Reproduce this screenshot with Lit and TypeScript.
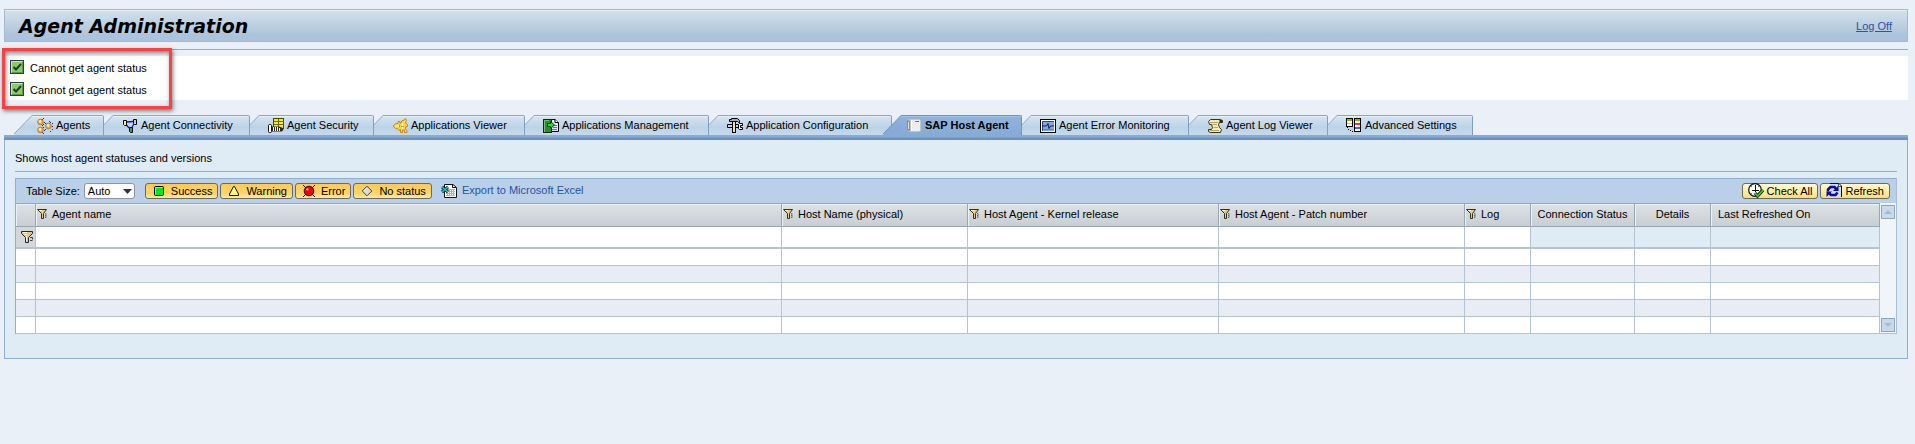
import { LitElement, html, css, svg, nothing } from "lit";
import { customElement, property, state } from "lit/decorators.js";
import { classMap } from "lit/directives/class-map.js";

const icons: Record<string, unknown> = {
  check: svg`<rect x="0.5" y="0.5" width="13" height="13" fill="#86cf5c" stroke="#2b3b4d"/><path d="M1.5 12.5V1.5H12.5" fill="none" stroke="#c4eea6"/><path d="M12.5 2V12.5H2" fill="none" stroke="#5a9a3c"/><path d="M3.5 7L6 9.5L11 4" fill="none" stroke="#24344a" stroke-width="2"/>`,
  agents: svg`<g fill="#1c2c9c"><path d="M6 0h1v1H6zM5 1h1v1H5zM7 4h1v1H7zM6 6h1v1H6zM5 7h1v1H5zM6 9h1v1H6zM7 12h1v1H7zM5 14h1v1H5zM6 15h1v1H6zM13 4h1v1h-1zM12 3h1v1h-1zM15 5h1v1h-1zM15 8h1v1h-1zM15 11h1v1h-1zM13 13h1v1h-1zM8 5h1v1H8zM8 11h1v1H8z"/></g><g stroke="#b06a18" stroke-width="0.8" fill="#f5a93c"><circle cx="3.5" cy="4" r="2.8"/><circle cx="3.5" cy="12" r="2.8"/><circle cx="11.5" cy="8" r="2.8"/></g><g fill="#fff0b8"><circle cx="3" cy="3.4" r="1.4"/><circle cx="3" cy="11.4" r="1.4"/><circle cx="11" cy="7.4" r="1.4"/></g>`,
  connectivity: svg`<path d="M5 4L11 3.5M4 6.5L7 10M12 6L9.5 10" fill="none" stroke="#1414e0" stroke-width="1.3"/><path d="M1.5 2.5H4.5V7.5H2.5L1.5 6.5Z" fill="#fff36a" stroke="#000"/><path d="M11.5 1.5H14.5V6.5H12.5L11.5 5.5Z" fill="#b8ccd8" stroke="#000"/><path d="M7.5 9.5H10.5V14.5H8.5L7.5 13.5Z" fill="#2ea836" stroke="#000"/>`,
  security: svg`<rect x="5.5" y="0.5" width="10" height="10" fill="#f5ea2a" stroke="#4a4604"/><path d="M6 3.5H15M6 6.5H15M10.5 1V10" stroke="#6e6806"/><path d="M4 8.5H11L14 9.5L15.5 11.5L14 13.5H4Z" fill="#2a2a2a"/><path d="M5.5 9V13M7.5 9V13M9.5 9V13M11.5 10V13" stroke="#f2f2f2"/><rect x="0.5" y="6.5" width="3" height="8" rx="1" fill="#fff" stroke="#111"/>`,
  viewer: svg`<path d="M1 8L4 5.5H6V3.5H8V5H9L10 2.5H12L12.5 1H14L14.5 2.5L13.5 5L15.5 6.5V8.5L13.5 9V11L15 12.5V14.5H12.5V12H10.5V14.5H8.5V11.5L7 12.5L5.5 10.5H3.5Z" fill="#fcd34c" stroke="#cf8a20"/><path d="M3.5 8H8M10.5 5V11M12.5 3V4" stroke="#fff6bc"/><path d="M7.5 6.5V9.5M9 8.5H12" stroke="#cf8a20" stroke-width="0.8"/>`,
  management: svg`<path d="M5.5 1.5H12L15.5 4.5V13.5H5.5Z" fill="#dfe8fa" stroke="#000"/><path d="M12 1.5V4.5H15.5" fill="#fff" stroke="#000"/><path d="M10 7.5H14M10 9.5H14M9 11.5H14" stroke="#5b74b8"/><rect x="0.5" y="1.5" width="8" height="13" fill="#2c8a34" stroke="#0a2a0c"/><path d="M1.5 14V2.5H6" fill="none" stroke="#7cc079"/><path d="M4.5 5.5H7.5V3.5L11.5 7L7.5 10.5V8.5H4.5Z" fill="#25e02b" stroke="#064a08"/>`,
  configuration: svg`<path d="M0.5 6.5H5M0.5 9.5H5M0.5 6.5V9.5M8.5 9.5H12M8.5 6.5H11" stroke="#000"/><path d="M1 8H12" stroke="#d0d4d8" stroke-width="2"/><path d="M15.5 5.5H12.5L11.5 6.5V10.5L12.5 11.5H15.5V9.5H13.5V7.5H15.5Z" fill="#f0f2f4" stroke="#000"/><path d="M2.5 1.5H4.5V0.5H10.5L12.5 2.5V4.5H11.5L10.5 3.5H2.5Z" fill="#a8aeb6" stroke="#000"/><rect x="5.5" y="3.5" width="3" height="11" fill="#f2dfa2" stroke="#000"/>`,
  host: svg`<path d="M1 2L4 1H14L15 3V13L12 14H3L1 12Z" fill="#c4c4c4"/><path d="M1 2L4 3V13L1 12Z" fill="#8f8f8f"/><rect x="5" y="2" width="9" height="11" fill="#ededed"/><path d="M5.5 13V2" stroke="#fff"/><path d="M2.5 4V11" stroke="#ddd"/><rect x="9" y="3" width="2" height="1" fill="#23b523"/><rect x="11" y="3" width="2" height="1" fill="#e03030"/>`,
  monitoring: svg`<rect x="0.5" y="1.5" width="15" height="13" fill="#fff" stroke="#000"/><rect x="2" y="3" width="12" height="10" fill="#82a8dc"/><path d="M2.5 13V3.5H14" fill="none" stroke="#2a4680"/><path d="M3 11.5H14" stroke="#5f86c0"/><path d="M2 8H6.5L8 5.5L9 10.5L10.5 8H14" fill="none" stroke="#0c1c54"/>`,
  log: svg`<path d="M3.5 1.5H13.5L15.5 2.5V4.5H12.5L11.5 6.5L12.5 9.5L14.5 11.5L13.5 14.5H3.5L1.5 13.5V11.5H4.5L5.5 9.5L4.5 6.5H2.5L1.5 3.5Z" fill="#f4ebb8" stroke="#3a3410"/><path d="M3 4.5H11.5M5.5 6.5H10M6.5 9.5H11M3 12.5H12" fill="none" stroke="#b0a766"/><path d="M12.5 2H15V4H12.5Z" fill="#222"/>`,
  settings: svg`<rect x="0.5" y="0.5" width="6" height="8" fill="#fff" stroke="#000"/><rect x="1" y="1" width="5" height="2" fill="#7ab81e"/><path d="M1 5.5H6" stroke="#c8c8c8"/><rect x="8.5" y="0.5" width="6" height="13" fill="#fff" stroke="#000"/><rect x="9" y="1" width="5" height="2" fill="#7ab81e"/><rect x="9" y="5" width="5" height="2" fill="#f03030"/><rect x="9" y="9" width="5" height="2" fill="#3a6cd8"/><path d="M1 9h1v1H1zM2 11h1v1H2zM4 12h1v1H4zM6 13h1v1H6z" fill="#000"/>`,
  success: svg`<rect x="3.5" y="3.5" width="9" height="9" rx="1" fill="#00e818" stroke="#000"/><path d="M4.5 11.5V4.5H11.5" fill="none" stroke="#7dfb88"/>`,
  warning: svg`<path d="M7.5 3.5H8.5L12.5 11V12.5H3.5V11Z" fill="#fff768" stroke="#111" stroke-linejoin="round"/>`,
  error: svg`<path d="M2 2L14 14M14 2L2 14" stroke="#111"/><circle cx="8" cy="8" r="4.8" fill="#f00000" stroke="#400"/><circle cx="6.4" cy="6.4" r="1.2" fill="#ffb0a0"/>`,
  none: svg`<path d="M8 3.2L12.8 8L8 12.8L3.2 8Z" fill="#dcdcdc" stroke="#444"/><path d="M5 8L8 5" stroke="#fff"/>`,
  excel: svg`<path d="M3.5 1.5H12L15.5 4.5V14.5H3.5Z" fill="#fff" stroke="#111"/><path d="M11.5 1.5V4.5H15" fill="none" stroke="#111"/><path d="M5 6.5H14M5 8.5H14M5 10.5H14M5 12.5H14M6.5 6V13M8.5 6V13M10.5 6V13M12.5 6V13" stroke="#aeb2b8"/><path d="M1 4L7 9M7 4L1 9" stroke="#0a3438" stroke-width="3"/><path d="M1 4L7 9M7 4L1 9" stroke="#27c4c8" stroke-width="1.3"/>`,
  checkAll: svg`<circle cx="7" cy="7" r="6.3" fill="#fff" stroke="#111" stroke-width="1.2"/><path d="M7.5 2V9M4 7.5H11" stroke="#111"/><path d="M3 3L4 4M11 3L10 4M3 11L4 10" stroke="#777"/><path d="M7 10L9.5 13L15 7" fill="none" stroke="#173c08" stroke-width="3.4"/><path d="M7 10L9.5 13L15 7" fill="none" stroke="#57c024" stroke-width="1.6"/>`,
  refresh: svg`<path d="M4.5 0.5H13L15.5 3V13.5H4.5Z" fill="#cfdcf4"/><path d="M4 0.5H13L15.5 3V14" fill="none" stroke="#111"/><path d="M12.5 1V3.5H15" fill="#fff" stroke="#555"/><path d="M2 8.5V6.5L4.5 4H8.5L10 6" fill="none" stroke="#0a0aa4" stroke-width="2.6"/><path d="M12.5 2.5V8H7Z" fill="#0a0aa4"/><path d="M11.5 9.5L9.5 12H5L3.5 10.5" fill="none" stroke="#0a0aa4" stroke-width="2.6"/><path d="M0.5 14V8.5H6Z" fill="#0a0aa4"/>`,
  filter: svg`<path d="M0.5 0.5H9.5L6.5 4.5V9.5H4.5V4.5L0.5 0.5Z" fill="#e8cc7c" stroke="#33301c"/><path d="M2 1.5H5" stroke="#fff6cc"/><path d="M8 4.5H9V6.5H8M8 8.5H9V6.5" fill="none" stroke="#6a6a70"/>`,
  filterBig: svg`<path d="M0.5 0.5H11.5V2.5L7.5 6.5V11.5H4.5V6.5L0.5 2.5Z" fill="#e3c688" stroke="#222638"/><path d="M2 1.5H6M3.5 3.5H6M5.5 5V10" stroke="#fff4cf"/><path d="M9 6.5H11.5V8.5M9 9.5H11.5" fill="none" stroke="#3a3e52"/>`,
};

const icon = (name: string, size = 16, h = size) =>
  html`<svg class="icon" width=${size} height=${h} viewBox="0 0 ${size} ${h}" aria-hidden="true">${icons[name]}</svg>`;

interface Tab { label: string; icon: string; width: number; active?: boolean; }

const tabs: Tab[] = [
  { label: "Agents", icon: "agents", width: 81 },
  { label: "Agent Connectivity", icon: "connectivity", width: 146 },
  { label: "Agent Security", icon: "security", width: 124 },
  { label: "Applications Viewer", icon: "viewer", width: 151 },
  { label: "Applications Management", icon: "management", width: 184 },
  { label: "Application Configuration", icon: "configuration", width: 183 },
  { label: "SAP Host Agent", icon: "host", width: 130, active: true },
  { label: "Agent Error Monitoring", icon: "monitoring", width: 167 },
  { label: "Agent Log Viewer", icon: "log", width: 139 },
  { label: "Advanced Settings", icon: "settings", width: 145 },
];

interface Column { label: string; cls: string; filter: boolean; }

const columns: Column[] = [
  { label: "Agent name", cls: "c-name", filter: true },
  { label: "Host Name (physical)", cls: "c-host", filter: true },
  { label: "Host Agent - Kernel release", cls: "c-kernel", filter: true },
  { label: "Host Agent - Patch number", cls: "c-patch", filter: true },
  { label: "Log", cls: "c-log", filter: true },
  { label: "Connection Status", cls: "c-conn", filter: false },
  { label: "Details", cls: "c-details", filter: false },
  { label: "Last Refreshed On", cls: "c-last", filter: false },
];

const reset = css`
  * { box-sizing: border-box; }
  button, select, input { font: inherit; color: inherit; margin: 0; }
  .icon { display: block; flex: none; }
`;

@customElement("agent-tabs")
class AgentTabs extends LitElement {
  static styles = [reset, css`
    :host { display: block; }
    .tabs { display: flex; padding-left: 19px; height: 20px; }
    .tab {
      display: flex; position: relative; flex: none; height: 20px; padding: 0;
      border: 0; background: none; text-align: left; cursor: pointer;
    }
    .slant { display: block; flex: none; margin-left: -9px; }
    .body {
      flex: 1; display: flex; align-items: center; gap: 3px; padding-left: 9px; height: 20px;
      border-top: 1px solid #86a8cb; border-right: 1px solid #7f9fc2; border-top-right-radius: 2px;
      background: linear-gradient(#d6e4f1, #bcd3e7 60%, #c4d9ec);
      box-shadow: inset 0 1px #e6f0f8; white-space: nowrap;
    }
    .label { padding-bottom: 2px; }
    .tab:first-child .body, .active .body { padding-left: 5px; }
    .active .body { background: linear-gradient(#8fb3dc, #86abd6); border-color: #6f93bf; box-shadow: inset 0 1px #a5c3e4; font-weight: bold; }
    .bar { height: 5px; background: linear-gradient(#8aabd1 40%, #6d92bf 60%, #6d92bf); }
  `];
  render() {
    return html`
      <div class="tabs" role="tablist">
        ${tabs.map((t, i) => html`
          <button role="tab" aria-selected=${t.active ? "true" : "false"}
            class=${classMap({ tab: true, active: !!t.active })}
            style="width:${t.width}px; z-index:${t.active ? 20 : tabs.length - i}">
            <svg class="slant" width="18" height="20" aria-hidden="true">
              <defs><linearGradient id="g${i}" x1="0" y1="0" x2="0" y2="1">
                <stop offset="0" stop-color=${t.active ? "#8fb3dc" : "#d6e4f1"}/>
                <stop offset="0.6" stop-color=${t.active ? "#86abd6" : "#bcd3e7"}/>
                <stop offset="1" stop-color=${t.active ? "#86abd6" : "#c4d9ec"}/>
              </linearGradient></defs>
              <path d="M0 19.5L18 0.5V20H0Z" fill="url(#g${i})"/>
              <path d="M0 19L17 1.5Q17.5 0.5 18.5 0.5" fill="none" stroke=${t.active ? "#6f93bf" : "#86a8cb"}/>
            </svg>
            <span class="body">${icon(t.icon)}<span class="label">${t.label}</span></span>
          </button>`)}
      </div>
      <div class="bar"></div>`;
  }
}

@customElement("agent-table")
class AgentTable extends LitElement {
  static styles = [reset, css`
    :host { display: block; border: 1px solid #8fafd0; border-width: 1px 1px 0; border-right-color: #a9bfd4; }
    .toolbar { display: flex; align-items: center; height: 24px; padding: 0 6px 0 10px; background: #b9d0e8; }
    .size { display: flex; align-items: center; gap: 4px; margin-right: 10px; }
    .picker { position: relative; display: block; }
    select {
      appearance: none; display: block; width: 51px; height: 16px; padding: 0 0 0 3px; line-height: 14px;
      border: 1px solid #8a96a4; border-radius: 3px; background: #fff;
    }
    .picker svg { position: absolute; right: 3px; top: 6px; pointer-events: none; }
    .group { display: flex; gap: 2px; }
    .btn {
      display: flex; align-items: center; height: 16px; padding: 0 5px; gap: 3px; white-space: nowrap;
      border: 1px solid #6d6a5c; border-radius: 3px; cursor: pointer; line-height: 14px;
      background: linear-gradient(#fff8d4, #fdeea8 50%, #f8dd7c);
    }
    .btn.on { gap: 4px; background: linear-gradient(#fbcb58, #fdd56e 70%, #ffe9a8); }
    .btn .icon { margin: -1px 0; }
    .export { display: flex; align-items: center; gap: 5px; margin-left: 9px; color: #2a52a5; text-decoration: none; }
    .export span { padding-bottom: 2px; }
    .actions { margin-left: auto; }
    .grid { display: flex; }
    table { flex: 1; min-width: 0; border-collapse: separate; border-spacing: 0; table-layout: fixed; }
    .c-sel { width: 20px; }
    .c-host { width: 186px; }
    .c-kernel { width: 251px; }
    .c-patch { width: 246px; }
    .c-log { width: 66px; }
    .c-conn { width: 104px; }
    .c-details { width: 76px; }
    .c-last { width: 169px; }
    th {
      height: 24px; padding: 0; font-weight: normal; text-align: left; white-space: nowrap;
      border: 1px solid #97a5b5; border-width: 1px 1px 1px 0;
      background: linear-gradient(#dde2e6, #c9ced3); box-shadow: inset 1px 1px #eef1f3;
    }
    .head { display: flex; align-items: center; gap: 5px; padding: 0 7px 2px; }
    .filterable .head { padding-left: 1px; }
    .c-conn .head, .c-details .head { justify-content: center; padding: 0 0 2px; }
    td { height: 17px; padding: 0; border: 1px solid #b6c3d0; border-width: 0 1px 1px 0; background: #fff; }
    .filters td { height: 22px; border-bottom-width: 2px; }
    .filters .none { background: #dfebf5; }
    .filters .handle { background: #d3d7dc; }
    .filters .icon { margin-left: 5px; }
    .even td { background: #e8edf5; }
    input { display: block; width: 100%; height: 20px; padding: 0 3px; border: 0; background: transparent; outline: 0; }
    .scroll {
      width: 16px; display: flex; flex-direction: column; justify-content: space-between; padding: 2px 1px 1px;
      border-bottom: 1px solid #b6c3d0; background: #f0f5f9;
    }
    .scroll button { display: grid; place-items: center; width: 14px; height: 14px; padding: 0; border: 1px solid #8da5bd; background: #c5daec; }
  `];
  @state() private size = "Auto";
  render() {
    return html`
      <div class="toolbar">
        <div class="size">
          <label for="size">Table Size:</label>
          <span class="picker">
            <select id="size" .value=${this.size} @change=${(e: Event) => (this.size = (e.target as HTMLSelectElement).value)}>
              <option>Auto</option>
            </select>
            <svg width="9" height="5" aria-hidden="true"><path d="M0 0H9L4.5 5Z" fill="#33334d"/></svg>
          </span>
        </div>
        <div class="group">
          <button class="btn on">${icon("success")}Success</button>
          <button class="btn on">${icon("warning")}Warning</button>
          <button class="btn on">${icon("error")}Error</button>
          <button class="btn on">${icon("none")}No status</button>
        </div>
        <a class="export" href="#">${icon("excel")}<span>Export to Microsoft Excel</span></a>
        <div class="group actions">
          <button class="btn">${icon("checkAll")}Check All</button>
          <button class="btn">${icon("refresh")}Refresh</button>
        </div>
      </div>
      <div class="grid">
        <table>
          <thead>
            <tr>
              <th class="c-sel"></th>
              ${columns.map(c => html`<th scope="col" class="${c.cls} ${c.filter ? "filterable" : ""}">
                <div class="head">${c.filter ? icon("filter", 10) : nothing}<span>${c.label}</span></div></th>`)}
            </tr>
          </thead>
          <tbody>
            <tr class="filters">
              <td class="handle">${icon("filterBig", 12)}</td>
              ${columns.map(c => c.filter
                ? html`<td><input type="text" aria-label=${c.label}></td>`
                : html`<td class="none"></td>`)}
            </tr>
            ${[0, 1, 2, 3, 4].map(r => html`<tr class=${r % 2 ? "even" : "odd"}><td></td>${columns.map(() => html`<td></td>`)}</tr>`)}
          </tbody>
        </table>
        <div class="scroll">
          <button aria-label="Scroll up" disabled><svg width="8" height="4"><path d="M0 4H8L4 0Z" fill="#b4b8bc"/></svg></button>
          <button aria-label="Scroll down" disabled><svg width="8" height="4"><path d="M0 0H8L4 4Z" fill="#b4b8bc"/></svg></button>
        </div>
      </div>`;
  }
}

@customElement("app-root")
class AppRoot extends LitElement {
  @property({ type: Array }) messages = ["Cannot get agent status", "Cannot get agent status"];
  static styles = [reset, css`
    :host {
      display: block; min-height: 100vh; padding: 9px 7px 0 4px; background: #e9f0f7; color: #000;
      box-sizing: border-box; font: 11px/14px "Liberation Sans", Arial, sans-serif;
    }
    header {
      display: flex; align-items: center; justify-content: space-between; height: 33px; padding: 0 15px 0 14px;
      border: 1px solid #a5b8cc; box-shadow: inset 0 1px #e4eef5;
      background: linear-gradient(#d2e1ed, #b8ccde 60%, #abc3dc 80%);
    }
    h1 { margin: 0; font: italic bold 19px/24px "DejaVu Sans", Verdana, sans-serif; }
    a { color: #2a52a5; }
    .rule { height: 1px; margin: 7px 0 6px; background: #94abc5; }
    .messages { display: flex; background: #fff; }
    .callout { position: relative; }
    .callout::after {
      content: ""; position: absolute; inset: -8px -18px -9px -2px; border: 3px solid #fb4141;
      box-shadow: 1px 2px 4px rgba(0, 0, 0, .5), inset 1px 2px 4px rgba(0, 0, 0, .45);
    }
    ul { list-style: none; margin: 0; padding: 0 7px 0 6px; }
    li { display: flex; align-items: center; gap: 6px; height: 22px; }
    li span { padding-top: 2px; }
    agent-tabs { margin-top: 15px; }
    .panel { padding: 11px 10px 24px; border: 1px solid #8fb0d2; border-top: 0; background: #dfebf5; }
    .intro { margin: 0; padding: 0 0 6px; border-bottom: 1px solid #94abc5; }
    agent-table { margin-top: 6px; }
  `];
  render() {
    return html`
      <header><h1>Agent Administration</h1><a href="#">Log Off</a></header>
      <div class="rule"></div>
      <div class="messages" role="status">
        <div class="callout">
          <ul>${this.messages.map(m => html`<li>${icon("check", 14)}<span>${m}</span></li>`)}</ul>
        </div>
      </div>
      <agent-tabs></agent-tabs>
      <main class="panel">
        <p class="intro">Shows host agent statuses and versions</p>
        <agent-table></agent-table>
      </main>`;
  }
}
